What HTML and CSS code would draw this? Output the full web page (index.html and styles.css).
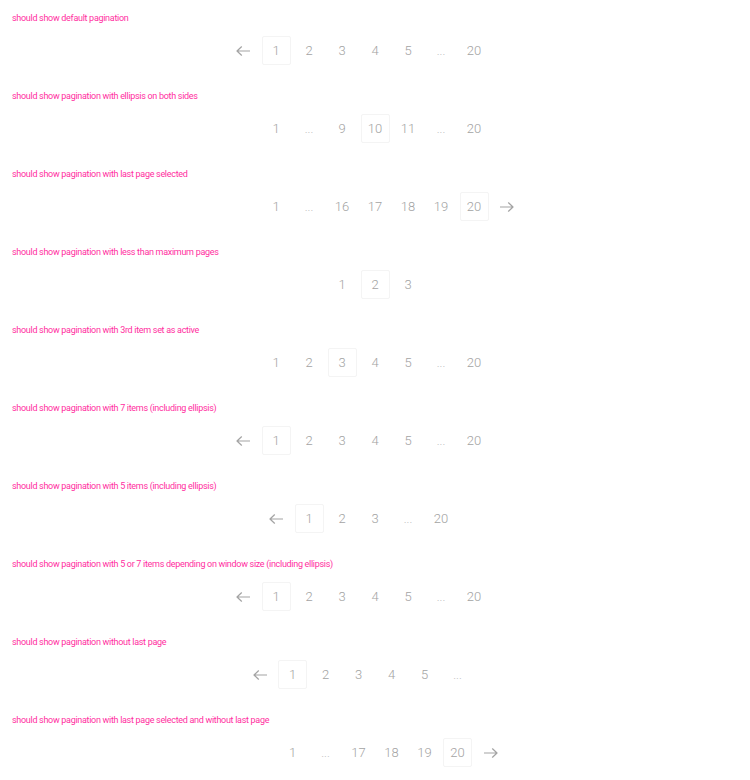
FILE: index.html
```html
<!DOCTYPE html>
<html>
<head>
<meta charset="utf-8">
<link rel="stylesheet" href="styles.css">
</head>
<body>
<div class="story">
  <div class="label">should show default pagination</div>
  <ul class="pagination">
    <li class="item arrow"><svg viewBox="0 0 14 10" class="ico"><path d="M13.5 5H1M5.5 0.8L1 5l4.5 4.2"/></svg></li>
    <li class="item active">1</li><li class="item">2</li><li class="item">3</li><li class="item">4</li><li class="item">5</li><li class="item dots">...</li><li class="item">20</li>
    <li class="item arrow hidden"><svg viewBox="0 0 14 10" class="ico"><path d="M0.5 5H13M8.5 0.8L13 5l-4.5 4.2"/></svg></li>
  </ul>
</div>
<div class="story">
  <div class="label">should show pagination with ellipsis on both sides</div>
  <ul class="pagination">
    <li class="item arrow hidden"><svg viewBox="0 0 14 10" class="ico"><path d="M13.5 5H1M5.5 0.8L1 5l4.5 4.2"/></svg></li>
    <li class="item">1</li><li class="item dots">...</li><li class="item">9</li><li class="item active">10</li><li class="item">11</li><li class="item dots">...</li><li class="item">20</li>
    <li class="item arrow hidden"><svg viewBox="0 0 14 10" class="ico"><path d="M0.5 5H13M8.5 0.8L13 5l-4.5 4.2"/></svg></li>
  </ul>
</div>
<div class="story">
  <div class="label">should show pagination with last page selected</div>
  <ul class="pagination">
    <li class="item arrow hidden"><svg viewBox="0 0 14 10" class="ico"><path d="M13.5 5H1M5.5 0.8L1 5l4.5 4.2"/></svg></li>
    <li class="item">1</li><li class="item dots">...</li><li class="item">16</li><li class="item">17</li><li class="item">18</li><li class="item">19</li><li class="item active">20</li>
    <li class="item arrow"><svg viewBox="0 0 14 10" class="ico"><path d="M0.5 5H13M8.5 0.8L13 5l-4.5 4.2"/></svg></li>
  </ul>
</div>
<div class="story">
  <div class="label">should show pagination with less than maximum pages</div>
  <ul class="pagination">
    <li class="item arrow hidden"><svg viewBox="0 0 14 10" class="ico"><path d="M13.5 5H1M5.5 0.8L1 5l4.5 4.2"/></svg></li>
    <li class="item">1</li><li class="item active">2</li><li class="item">3</li>
    <li class="item arrow hidden"><svg viewBox="0 0 14 10" class="ico"><path d="M0.5 5H13M8.5 0.8L13 5l-4.5 4.2"/></svg></li>
  </ul>
</div>
<div class="story">
  <div class="label">should show pagination with 3rd item set as active</div>
  <ul class="pagination">
    <li class="item arrow hidden"><svg viewBox="0 0 14 10" class="ico"><path d="M13.5 5H1M5.5 0.8L1 5l4.5 4.2"/></svg></li>
    <li class="item">1</li><li class="item">2</li><li class="item active">3</li><li class="item">4</li><li class="item">5</li><li class="item dots">...</li><li class="item">20</li>
    <li class="item arrow hidden"><svg viewBox="0 0 14 10" class="ico"><path d="M0.5 5H13M8.5 0.8L13 5l-4.5 4.2"/></svg></li>
  </ul>
</div>
<div class="story">
  <div class="label">should show pagination with 7 items (including ellipsis)</div>
  <ul class="pagination">
    <li class="item arrow"><svg viewBox="0 0 14 10" class="ico"><path d="M13.5 5H1M5.5 0.8L1 5l4.5 4.2"/></svg></li>
    <li class="item active">1</li><li class="item">2</li><li class="item">3</li><li class="item">4</li><li class="item">5</li><li class="item dots">...</li><li class="item">20</li>
    <li class="item arrow hidden"><svg viewBox="0 0 14 10" class="ico"><path d="M0.5 5H13M8.5 0.8L13 5l-4.5 4.2"/></svg></li>
  </ul>
</div>
<div class="story">
  <div class="label">should show pagination with 5 items (including ellipsis)</div>
  <ul class="pagination">
    <li class="item arrow"><svg viewBox="0 0 14 10" class="ico"><path d="M13.5 5H1M5.5 0.8L1 5l4.5 4.2"/></svg></li>
    <li class="item active">1</li><li class="item">2</li><li class="item">3</li><li class="item dots">...</li><li class="item">20</li>
    <li class="item arrow hidden"><svg viewBox="0 0 14 10" class="ico"><path d="M0.5 5H13M8.5 0.8L13 5l-4.5 4.2"/></svg></li>
  </ul>
</div>
<div class="story">
  <div class="label">should show pagination with 5 or 7 items depending on window size (including ellipsis)</div>
  <ul class="pagination">
    <li class="item arrow"><svg viewBox="0 0 14 10" class="ico"><path d="M13.5 5H1M5.5 0.8L1 5l4.5 4.2"/></svg></li>
    <li class="item active">1</li><li class="item">2</li><li class="item">3</li><li class="item">4</li><li class="item">5</li><li class="item dots">...</li><li class="item">20</li>
    <li class="item arrow hidden"><svg viewBox="0 0 14 10" class="ico"><path d="M0.5 5H13M8.5 0.8L13 5l-4.5 4.2"/></svg></li>
  </ul>
</div>
<div class="story">
  <div class="label">should show pagination without last page</div>
  <ul class="pagination">
    <li class="item arrow"><svg viewBox="0 0 14 10" class="ico"><path d="M13.5 5H1M5.5 0.8L1 5l4.5 4.2"/></svg></li>
    <li class="item active">1</li><li class="item">2</li><li class="item">3</li><li class="item">4</li><li class="item">5</li><li class="item dots">...</li>
    <li class="item arrow hidden"><svg viewBox="0 0 14 10" class="ico"><path d="M0.5 5H13M8.5 0.8L13 5l-4.5 4.2"/></svg></li>
  </ul>
</div>
<div class="story">
  <div class="label">should show pagination with last page selected and without last page</div>
  <ul class="pagination">
    <li class="item arrow hidden"><svg viewBox="0 0 14 10" class="ico"><path d="M13.5 5H1M5.5 0.8L1 5l4.5 4.2"/></svg></li>
    <li class="item">1</li><li class="item dots">...</li><li class="item">17</li><li class="item">18</li><li class="item">19</li><li class="item active">20</li>
    <li class="item arrow"><svg viewBox="0 0 14 10" class="ico"><path d="M0.5 5H13M8.5 0.8L13 5l-4.5 4.2"/></svg></li>
  </ul>
</div>
</body>
</html>
```
FILE: styles.css
```css
html, body {
  margin: 0;
  padding: 0;
  background: #ffffff;
}
.story {
  padding: 11px 12px 13px;
}
.label {
  font-family: Roboto, "Liberation Sans", sans-serif;
  font-size: 9px;
  letter-spacing: -0.3px;
  line-height: 14px;
  color: #ff2ea0;
  height: 14px;
}
.pagination {
  list-style: none;
  margin: 11px 0 0;
  padding: 0;
  display: flex;
  justify-content: center;
  height: 29px;
}
.item {
  box-sizing: border-box;
  width: 29px;
  height: 29px;
  margin: 0 2px;
  border: 1px solid transparent;
  border-radius: 2px;
  display: flex;
  align-items: center;
  justify-content: center;
  font-family: Roboto, "Liberation Sans", sans-serif;
  font-weight: 300;
  font-size: 13px;
  color: #a3a3a3;
}
.item.active {
  border-color: #f4f4f4;
}
.item.dots {
  font-size: 12px;
  color: #bdbdbd;
  padding-top: 1px;
}
.item.hidden {
  visibility: hidden;
}
.ico {
  width: 14px;
  height: 10px;
  fill: none;
  stroke: #a3a3a3;
  stroke-width: 1.2;
  stroke-linecap: round;
  stroke-linejoin: round;
}
```
